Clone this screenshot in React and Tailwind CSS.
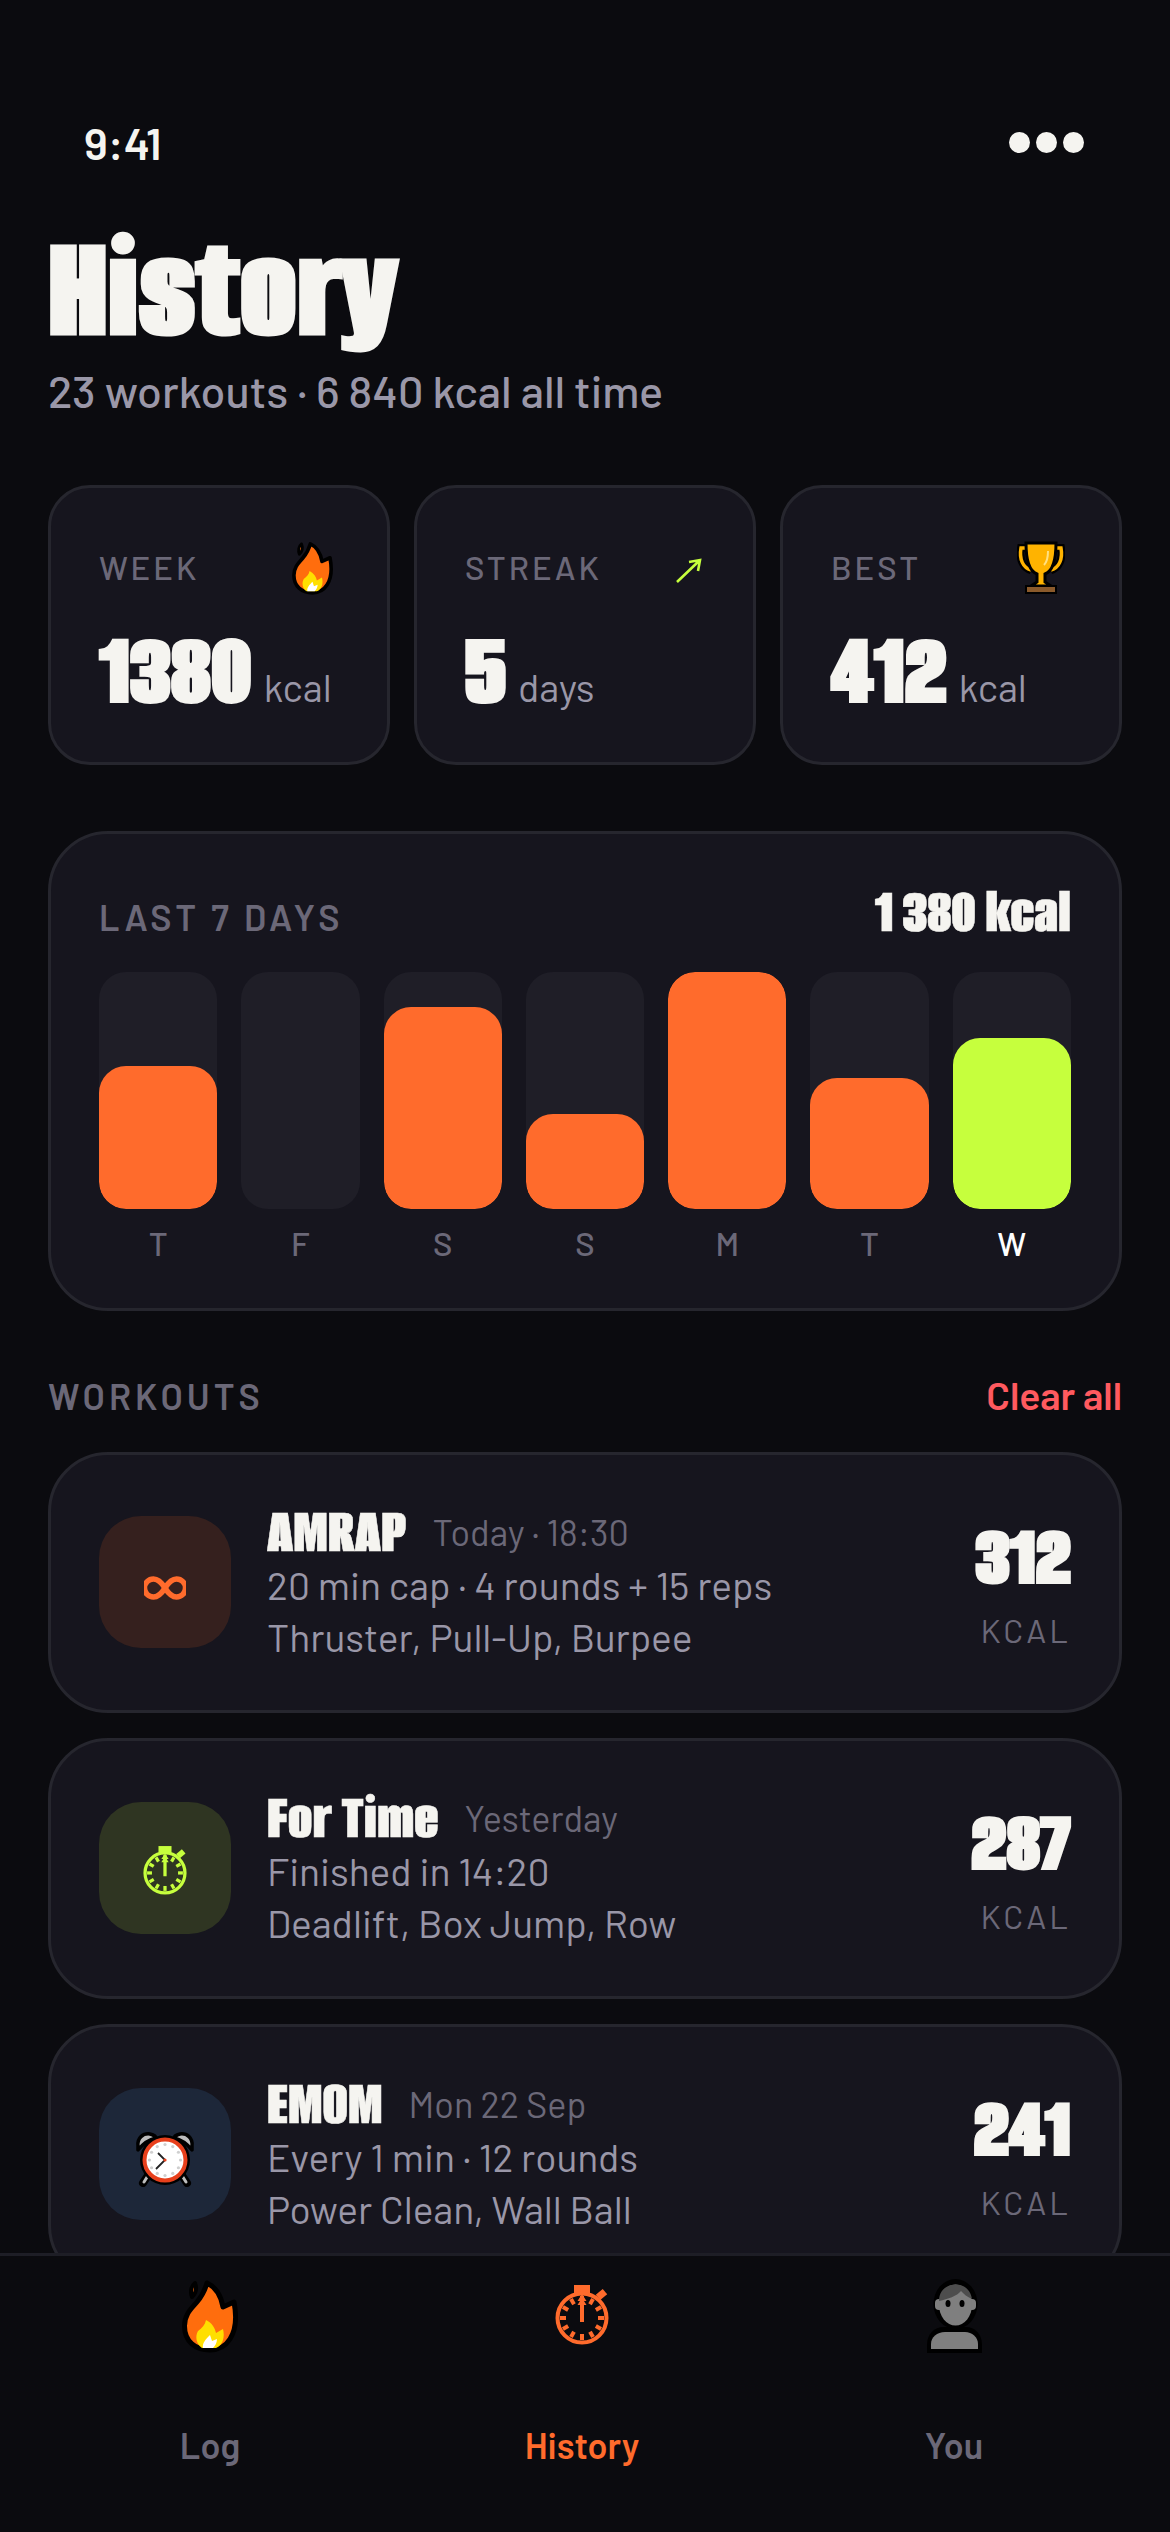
import React from 'react';

const heavy = "font-['Alumni_Sans','Barlow_Condensed',sans-serif] font-black whitespace-nowrap text-[#f5f4f0]";

function Flame({ className }) {
  return (
    <svg viewBox="0 0 56 74" className={className}>
      <path d="M25 4 C34 8 39 17 41 28 L52 23 C54.5 36 54.5 50 48 60 C43 68 35 71 28 71 C13 71 2.5 62 2.5 47 C2.5 35 10 29 15 23 C20 17 23 11 25 4Z" fill="#ff6d0d" stroke="#000" strokeWidth="5" strokeLinejoin="round" />
      <path d="M13 4 C9 7 8 13 10 18 C14 14 15 9 13 4Z" fill="#ff6d0d" stroke="#000" strokeWidth="4" strokeLinejoin="round" />
      <path d="M24 41 C30 44 33 49 34 54 L41 50 C43 58 41 66 34 69 L20 69 C14 65 13 57 16 52 C20 49 23 46 24 41Z" fill="#ffdf00" />
      <path d="M28 56 L30 62 L35 60 C35 64 33 67 31 69 L21 69 C20 64 24 60 28 56Z" fill="#fff" />
    </svg>
  );
}

function Trophy({ className }) {
  return (
    <svg viewBox="0 0 48 54" className={className}>
      <path d="M11 7 H4 C2 18 6 27 14 29 M37 7 H44 C46 18 42 27 34 29" fill="none" stroke="#000" strokeWidth="8" />
      <path d="M11 7 H4 C2 18 6 27 14 29 M37 7 H44 C46 18 42 27 34 29" fill="none" stroke="#ffb300" strokeWidth="3.5" />
      <path d="M9 2 H39 C39 18 36 30 28 33 L28 41 L34 45 H14 L20 41 L20 33 C12 30 9 18 9 2Z" fill="#ffb300" stroke="#000" strokeWidth="3" />
      <rect x="8" y="44" width="32" height="9" fill="#000" />
      <rect x="10" y="46" width="28" height="5" fill="#8b5a2b" />
      <path d="M31 10 C31 17 30 21 27 24" fill="none" stroke="#ffe082" strokeWidth="2" />
    </svg>
  );
}

function AlarmClock({ className }) {
  const dots = [0, 1, 2, 3, 4, 5, 6, 7, 8, 9, 10, 11];
  return (
    <svg viewBox="0 0 60 56" className={className}>
      <path d="M14 43 L8 52 M46 43 L52 52" stroke="#000" strokeWidth="8" strokeLinecap="round" />
      <path d="M14 43 L9 51 M46 43 L51 51" stroke="#bdbdbd" strokeWidth="3" strokeLinecap="round" />
      <path d="M3 15 C2 7 8 2 15 3 C19 4 21 6 21 7 C12 9 7 14 3 19Z" fill="#bdbdbd" stroke="#000" strokeWidth="3.5" strokeLinejoin="round" />
      <path d="M57 15 C58 7 52 2 45 3 C41 4 39 6 39 7 C48 9 53 14 57 19Z" fill="#bdbdbd" stroke="#000" strokeWidth="3.5" strokeLinejoin="round" />
      <circle cx="30" cy="29" r="25" fill="#000" />
      <circle cx="30" cy="29" r="20.5" fill="#fff" stroke="#e8401c" strokeWidth="4" />
      {dots.map((d) => (
        <circle key={d} cx={30 + 15.5 * Math.cos((d * Math.PI) / 6)} cy={29 + 15.5 * Math.sin((d * Math.PI) / 6)} r="1.6" fill="#cfcfcf" />
      ))}
      <path d="M23 22 L30 29 L21 38" fill="none" stroke="#222" strokeWidth="1.8" />
      <circle cx="30" cy="29" r="1.6" fill="#e8401c" />
    </svg>
  );
}

function Stopwatch({ className }) {
  const ticks = [0, 1, 2, 3, 4, 5, 6, 7, 8, 9, 10, 11];
  return (
    <svg viewBox="0 0 54 60" fill="currentColor" className={className}>
      <rect x="19" y="0" width="16" height="9" />
      <rect x="42" y="6" width="9" height="7" transform="rotate(-40 46.5 9.5)" />
      <circle cx="27" cy="33" r="24.5" fill="none" stroke="currentColor" strokeWidth="4" />
      {ticks.map((t) => (
        <rect key={t} x="25" y="11" width="4" height="6" transform={`rotate(${t * 30} 27 33)`} />
      ))}
      <path d="M25 37 V20 H22.5 L25 16 H22.5 L27 9 L31.5 16 H29 L31.5 20 H29 V37Z" />
    </svg>
  );
}

function Person({ className }) {
  return (
    <svg viewBox="0 0 60 74" className={className}>
      <ellipse cx="31.5" cy="25" rx="22" ry="25" fill="#000" />
      <path d="M3 74 V66 C3 55 10 48 20 48 H42 C51 48 58 55 58 66 V74Z" fill="#000" />
      <rect x="11" y="20" width="41" height="11" rx="4" fill="#7f7f7f" />
      <ellipse cx="31.5" cy="26" rx="16.5" ry="20.5" fill="#7f7f7f" />
      <path d="M15 22 C15 11 23 5.5 32 5.5 C41 5.5 47 12 48 20 C43 18 40 15 37 12 C33 17 24 20 15 22Z" fill="#4d4d4d" />
      <ellipse cx="24" cy="24.5" rx="2.5" ry="3.5" fill="#000" />
      <ellipse cx="38" cy="24.5" rx="2.5" ry="3.5" fill="#000" />
      <path d="M7 70 V65 C7 58 13 53 21 53 H41 C48 53 54 58 54 65 V70Z" fill="#7f7f7f" />
    </svg>
  );
}

function Infinity2({ className }) {
  return (
    <svg viewBox="0 0 42 24" className={className}>
      <path d="M21 12 C16 4 12 3 9.5 3 a9 9 0 0 0 0 18 C12 21 16 20 21 12 C26 4 30 3 32.5 3 a9 9 0 0 1 0 18 C30 21 26 20 21 12Z" fill="none" stroke="currentColor" strokeWidth="5.5" />
    </svg>
  );
}

function ArrowUpRight({ className }) {
  return (
    <svg viewBox="0 0 27 25" className={className}>
      <path d="M2 24 L24 3 M14 4 L25 2 L23 13" fill="none" stroke="#c6ff3d" strokeWidth="2.6" />
    </svg>
  );
}

const stats = [
  { label: 'WEEK', icon: <Flame className="w-[41px] h-[54px] mr-[6px]" />, value: '1380', unit: 'kcal' },
  { label: 'STREAK', icon: <ArrowUpRight className="w-[27px] h-[25px] mr-[3px] mt-[4px]" />, value: '5', unit: 'days' },
  { label: 'BEST', icon: <Trophy className="w-[48px] h-[54px] mr-[6px]" />, value: '412', unit: 'kcal' },
];

const bars = [
  { day: 'T', height: 'h-[143px]', color: 'bg-[#ff6b2c]' },
  { day: 'F', height: 'h-0', color: 'bg-[#ff6b2c]' },
  { day: 'S', height: 'h-[202px]', color: 'bg-[#ff6b2c]' },
  { day: 'S', height: 'h-[95px]', color: 'bg-[#ff6b2c]' },
  { day: 'M', height: 'h-[237px]', color: 'bg-[#ff6b2c]' },
  { day: 'T', height: 'h-[131px]', color: 'bg-[#ff6b2c]' },
  { day: 'W', height: 'h-[171px]', color: 'bg-[#c6ff3d]', today: true },
];

const workouts = [
  { name: 'AMRAP', when: 'Today · 18:30', line1: '20 min cap · 4 rounds + 15 reps', line2: 'Thruster, Pull-Up, Burpee', kcal: '312', box: 'bg-[#35201e]', icon: <Infinity2 className="w-[42px] h-[24px] mt-[12px] text-[#ff6b2c]" /> },
  { name: 'For Time', when: 'Yesterday', line1: 'Finished in 14:20', line2: 'Deadlift, Box Jump, Row', kcal: '287', box: 'bg-[#2f3522]', icon: <Stopwatch className="w-[44px] h-[49px] mt-[4px] text-[#c6ff3d]" /> },
  { name: 'EMOM', when: 'Mon 22 Sep', line1: 'Every 1 min · 12 rounds', line2: 'Power Clean, Wall Ball', kcal: '241', box: 'bg-[#1d2739]', icon: <AlarmClock className="w-[60px] h-[56px] mt-[10px]" /> },
];

const tabs = [
  { label: 'Log', icon: <Flame className="w-[56px] h-[74px]" />, text: 'text-[#6b6878]' },
  { label: 'History', icon: <Stopwatch className="w-[54px] h-[60px] mt-[6px] text-[#ff6b2c]" />, text: 'text-[#ff6b2c]' },
  { label: 'You', icon: <Person className="w-[60px] h-[74px]" />, text: 'text-[#6b6878]' },
];

function StatCard({ stat }) {
  return (
    <div className="flex-1 h-[280px] rounded-[42px] border-[3px] border-[#26262e] bg-[#16151e] px-[48px] pt-[53px]">
      <div className="flex items-center justify-between h-[54px]">
        <span className="text-[33px] tracking-[3px] font-medium text-[#6b6878]">{stat.label}</span>
        {stat.icon}
      </div>
      <div className="flex items-baseline gap-[12px] mt-[33px]">
        <span className={`${heavy} text-[105px] leading-[84px] [-webkit-text-stroke:2px_currentColor]`}>{stat.value}</span>
        <span className="text-[39px] leading-[84px] text-[#9a97a8]">{stat.unit}</span>
      </div>
    </div>
  );
}

function WorkoutCard({ workout }) {
  return (
    <div className="shrink-0 h-[261px] flex items-center rounded-[60px] border-[3px] border-[#26262e] bg-[#16151e] px-[48px]">
      <div className={`w-[132px] h-[132px] rounded-[42px] flex items-center justify-center ${workout.box}`}>
        {workout.icon}
      </div>
      <div className="flex-1 ml-[36px] pt-[3px]">
        <div className="flex items-center gap-[26px]">
          <span className={`${heavy} text-[64px] leading-[54px] [-webkit-text-stroke:0.5px_currentColor]`}>{workout.name}</span>
          <span className="text-[36px] leading-[54px] text-[#6b6878]">{workout.when}</span>
        </div>
        <div className="text-[39px] leading-[52px] text-[#9a97a8]">{workout.line1}</div>
        <div className="text-[39px] leading-[52px] text-[#9a97a8]">{workout.line2}</div>
      </div>
      <div className="text-right pt-[8px]">
        <div className={`${heavy} text-[88px] leading-[80px] [-webkit-text-stroke:2px_currentColor]`}>{workout.kcal}</div>
        <div className="text-[33px] tracking-[3px] text-[#6b6878] mt-[9px]">KCAL</div>
      </div>
    </div>
  );
}

export default function App() {
  return (
    <div className="w-[1170px] h-[2532px] flex flex-col overflow-hidden bg-[#0b0b0f] font-['Barlow',sans-serif]">
      <div className="flex-1 min-h-0 overflow-hidden px-[48px]">
        <div className="flex items-center justify-between pt-[118px] pl-[36px] pr-[38px] h-[166px]">
          <span className="text-[45px] leading-[48px] font-semibold text-[#f5f4f0]">9:41</span>
          <div className="flex gap-[6px]">
            <div className="w-[21px] h-[21px] rounded-full bg-[#f5f4f0]"></div>
            <div className="w-[21px] h-[21px] rounded-full bg-[#f5f4f0]"></div>
            <div className="w-[21px] h-[21px] rounded-full bg-[#f5f4f0]"></div>
          </div>
        </div>

        <h1 className={`${heavy} text-[148px] leading-[120px] mt-[64px] [-webkit-text-stroke:3px_currentColor]`}>History</h1>
        <p className="text-[45px] leading-[50px] font-medium text-[#9a97a8] mt-[15px]">23 workouts · 6 840 kcal all time</p>

        <div className="flex gap-[24px] mt-[70px]">
          {stats.map((stat) => <StatCard key={stat.label} stat={stat} />)}
        </div>

        <div className="mt-[66px] h-[480px] rounded-[60px] border-[3px] border-[#26262e] bg-[#16151e] px-[48px] pt-[51px]">
          <div className="flex items-baseline justify-between h-[54px]">
            <span className="text-[36px] tracking-[4px] font-semibold text-[#6b6878]">LAST 7 DAYS</span>
            <span className={`${heavy} text-[63px] leading-[54px] [-webkit-text-stroke:0.5px_currentColor]`}>1 380 kcal</span>
          </div>
          <div className="flex gap-[24px] mt-[33px]">
            {bars.map((bar, i) => (
              <div key={i} className="flex-1 flex flex-col items-center">
                <div className="w-full h-[237px] flex items-end rounded-[27px] bg-[#1f1e27] overflow-hidden">
                  <div className={`w-full rounded-[27px] ${bar.height} ${bar.color}`}></div>
                </div>
                <span className={`mt-[10px] text-[33px] font-medium ${bar.today ? 'text-white font-bold' : 'text-[#6b6878]'}`}>{bar.day}</span>
              </div>
            ))}
          </div>
        </div>

        <div className="flex items-baseline justify-between mt-[55px] mb-[27px]">
          <span className="text-[36px] tracking-[4px] font-semibold text-[#6b6878]">WORKOUTS</span>
          <span className="text-[39px] font-semibold text-[#ff5a5f]">Clear all</span>
        </div>

        <div className="flex flex-col gap-[25px]">
          {workouts.map((workout) => <WorkoutCard key={workout.name} workout={workout} />)}
        </div>
      </div>

      <div className="shrink-0 h-[279px] border-t-[3px] border-[#1e1e26] bg-[#0b0b0f] pl-[24px] pr-[30px] flex">
        {tabs.map((tab) => (
          <div key={tab.label} className="flex-1 flex flex-col items-center pt-[23px]">
            <div className="h-[74px] flex items-start">{tab.icon}</div>
            <span className={`mt-[70px] text-[36px] leading-[44px] font-semibold ${tab.text}`}>{tab.label}</span>
          </div>
        ))}
      </div>
    </div>
  );
}
